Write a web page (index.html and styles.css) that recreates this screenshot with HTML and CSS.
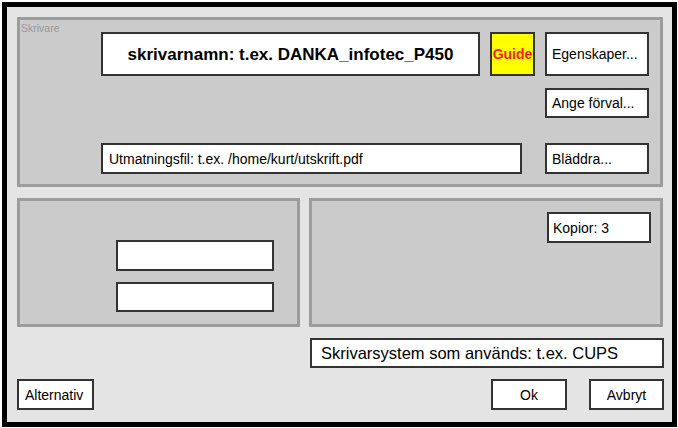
FILE: index.html
```html
<!DOCTYPE html>
<html lang="sv">
<head>
<meta charset="utf-8">
<link rel="stylesheet" href="styles.css">
</head>
<body>
<div class="frame">
  <div class="group top">
    <span class="legend">Skrivare</span>
    <div class="box name">skrivarnamn: t.ex. DANKA_infotec_P450</div>
    <div class="box guide">Guide</div>
    <div class="box btn">Egenskaper...</div>
    <div class="box btn r2">Ange förval...</div>
    <div class="box field r3">Utmatningsfil: t.ex. /home/kurt/utskrift.pdf</div>
    <div class="box btn r3 c3">Bläddra...</div>
  </div>
  <div class="middle">
    <div class="group left">
      <div class="box input"></div>
      <div class="box input second"></div>
    </div>
    <div class="group right">
      <div class="box btn kopior">Kopior: 3</div>
    </div>
  </div>
  <div class="system-row">
    <div class="box system">Skrivarsystem som används: t.ex. CUPS</div>
  </div>
  <div class="bottom">
    <div class="box btn alt">Alternativ</div>
    <div class="spacer"></div>
    <div class="box btn ok">Ok</div>
    <div class="box btn cancel">Avbryt</div>
  </div>
</div>
</body>
</html>
```

FILE: styles.css
```css
html, body {
  margin: 0;
  padding: 0;
  background: #ffffff;
}
body {
  font-family: "Liberation Sans", Arial, sans-serif;
  color: #000;
}
.frame {
  box-sizing: border-box;
  margin: 2px 0 0 2px;
  width: 675px;
  height: 425px;
  border: 5px solid #000;
  background: #e4e4e4;
  padding: 10px 8px 10px 10px;
  display: flex;
  flex-direction: column;
}
.group {
  box-sizing: border-box;
  background: #cbcbcb;
  border: 3px solid #9c9c9c;
}
.box {
  box-sizing: border-box;
  border: 2px solid #333;
  background: #fff;
  display: flex;
  align-items: center;
  font-size: 14px;
  white-space: nowrap;
}
.top {
  position: relative;
  height: 170px;
  margin-right: 1px;
  display: grid;
  grid-template-columns: 379px 45px 104px;
  grid-template-rows: 44px 30px 44px;
  column-gap: 10px;
  row-gap: 12px;
  padding: 12px 9px 0 81px;
  align-content: start;
}
.top .r2 { grid-column: 3; grid-row: 2; }
.top .r3 { grid-row: 3; align-self: end; height: 31px; }
.top .field { grid-column: 1 / span 2; width: 421px; padding-left: 6px; }
.top .c3 { grid-column: 3; }
.legend {
  position: absolute;
  left: 1px;
  top: 2px;
  font-size: 10.5px;
  color: #999;
}
.name {
  justify-content: center;
  font-size: 17px;
  font-weight: bold;
  padding-top: 1px;
}
.guide {
  background: #ffff00;
  color: #ff1a1a;
  font-weight: bold;
  font-size: 14px;
  justify-content: center;
}
.btn {
  padding-left: 5px;
}
.middle {
  display: flex;
  gap: 9px;
  margin-top: 11px;
  height: 129px;
  margin-right: 1px;
}
.left {
  width: 283px;
  padding: 39px 0 0 96px;
  display: flex;
  flex-direction: column;
  gap: 11px;
}
.input {
  width: 158px;
  height: 31px;
}
.input.second { height: 30px; }
.right {
  flex: 1;
  display: flex;
  justify-content: flex-end;
  align-items: flex-start;
  padding: 11px 9px 0 0;
}
.kopior {
  width: 104px;
  height: 31px;
  padding-left: 4px;
}
.system-row {
  display: flex;
  justify-content: flex-end;
  margin-top: 11px;
}
.system {
  width: 354px;
  height: 30px;
  font-size: 16.5px;
  padding-left: 9px;
}
.bottom {
  display: flex;
  margin-top: 11px;
  height: 31px;
}
.alt {
  width: 77px;
  padding-left: 6px;
}
.spacer { flex: 1; }
.ok, .cancel {
  width: 76px;
  justify-content: center;
  padding-left: 0;
}
.ok { margin-right: 22px; }
.cancel { width: 75px; }
```
